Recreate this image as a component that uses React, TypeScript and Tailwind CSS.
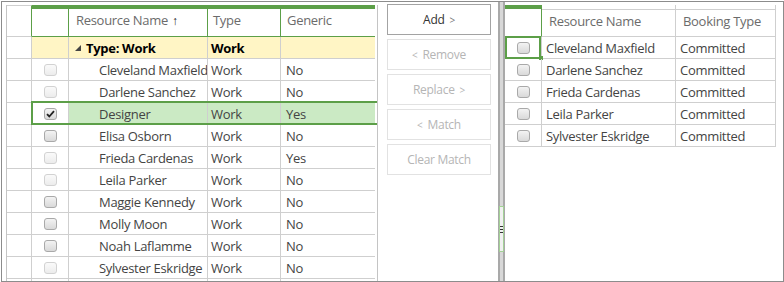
import React from 'react';

const font = { fontFamily: '"Open Sans", "Noto Sans", sans-serif' };

interface Row {
  name: string;
  type: string;
  generic: string;
  faded?: boolean;
  checked?: boolean;
  selected?: boolean;
}

const leftRows: Row[] = [
  { name: 'Cleveland Maxfield', type: 'Work', generic: 'No', faded: true },
  { name: 'Darlene Sanchez', type: 'Work', generic: 'No', faded: true },
  { name: 'Designer', type: 'Work', generic: 'Yes', checked: true, selected: true },
  { name: 'Elisa Osborn', type: 'Work', generic: 'No' },
  { name: 'Frieda Cardenas', type: 'Work', generic: 'Yes', faded: true },
  { name: 'Leila Parker', type: 'Work', generic: 'No', faded: true },
  { name: 'Maggie Kennedy', type: 'Work', generic: 'No' },
  { name: 'Molly Moon', type: 'Work', generic: 'No' },
  { name: 'Noah Laflamme', type: 'Work', generic: 'No' },
  { name: 'Sylvester Eskridge', type: 'Work', generic: 'No', faded: true },
];

const rightRows = ['Cleveland Maxfield', 'Darlene Sanchez', 'Frieda Cardenas', 'Leila Parker', 'Sylvester Eskridge'];

const Checkbox: React.FC<{ faded?: boolean; checked?: boolean }> = ({ faded, checked }) => (
  <div
    className={
      'w-[13px] h-[12px] rounded-[3px] border flex items-center justify-center ' +
      (faded
        ? 'border-[#d2d2d2] bg-gradient-to-b from-[#fafafa] to-[#ececec]'
        : 'border-[#a9a9a9] bg-gradient-to-b from-[#f3f3f3] to-[#d9d9d9]')
    }
  >
    {checked && (
      <svg width="9" height="8" viewBox="0 0 9 8">
        <path d="M1 4.2 L3.3 6.5 L8 1.2" fill="none" stroke="#222" strokeWidth="1.8" />
      </svg>
    )}
  </div>
);

const LeftGrid = () => (
  <div className="ml-[4px] mt-[3px] w-[372px] border-x border-[#c4c4c4] overflow-hidden flex flex-col">
    {/* header */}
    <div className="flex h-[32px] shrink-0">
      <div className="w-[25px] border-t border-b border-r border-t-[#cfcfcf] border-b-[#cfcfcf] border-r-[#5c9f48]" />
      <div className="w-[37px] border-t-4 border-r border-b border-[#5c9f48]" />
      <div className="w-[139px] border-t-4 border-r border-b border-[#5c9f48] pl-[7px] pb-[4px] flex items-center text-[#6b6b6b]">
        Resource Name <span className="ml-[4px] text-[12px] text-[#222]">↑</span>
      </div>
      <div className="w-[73px] border-t-4 border-r border-b border-[#5c9f48] pl-[5px] pb-[4px] flex items-center text-[#6b6b6b]">
        Type
      </div>
      <div className="w-[94px] border-t-4 border-b border-[#5c9f48] pl-[6px] pb-[4px] flex items-center text-[#6b6b6b]">
        Generic
      </div>
    </div>
    {/* group row */}
    <div className="flex h-[22px] shrink-0">
      <div className="w-[25px] border-r border-b border-[#cfcfcf]" />
      <div className="w-[37px] border-r border-b border-[#cfcfcf] bg-[#fff5c5]" />
      <div className="w-[139px] border-r border-b border-[#cfcfcf] bg-[#fff5c5] flex items-center pl-[6px] pt-px font-bold text-black whitespace-nowrap">
        <svg width="6" height="6" viewBox="0 0 6 6" className="mr-[5px]">
          <polygon points="6,0 6,6 0,6" fill="#444" />
        </svg>
        Type: Work
      </div>
      <div className="w-[73px] border-r border-b border-[#cfcfcf] bg-[#fff5c5] flex items-center pl-[3px] pt-px font-bold text-black">
        Work
      </div>
      <div className="w-[94px] border-b border-[#cfcfcf] bg-[#fff5c5]" />
    </div>
    {leftRows.map((r) => (
      <div key={r.name} className="relative flex h-[22px] shrink-0">
        <div className="w-[25px] border-r border-b border-[#cfcfcf]" />
        <div className="w-[37px] border-r border-b border-[#cfcfcf] flex items-center justify-center">
          <Checkbox faded={r.faded} checked={r.checked} />
        </div>
        <div
          className={
            'w-[139px] border-r border-b border-[#cfcfcf] flex items-center pl-[30px] pt-px whitespace-nowrap overflow-hidden ' +
            (r.selected ? 'bg-[#cbeac4]' : '')
          }
        >
          {r.name}
        </div>
        <div
          className={
            'w-[73px] border-r border-b border-[#cfcfcf] flex items-center pl-[3px] pt-px ' +
            (r.selected ? 'bg-[#cbeac4]' : '')
          }
        >
          {r.type}
        </div>
        <div
          className={
            'w-[94px] border-b border-[#cfcfcf] flex items-center pl-[5px] pt-px ' + (r.selected ? 'bg-[#cbeac4]' : '')
          }
        >
          {r.generic}
        </div>
        {r.selected && (
          <div className="absolute left-[24px] -right-[3px] -top-[2px] bottom-0 border-2 border-[#5c9f48] pointer-events-none" />
        )}
      </div>
    ))}
    <div className="flex h-[22px] shrink-0">
      <div className="w-[25px] border-r border-[#cfcfcf]" />
      <div className="w-[37px] border-r border-[#cfcfcf]" />
      <div className="w-[139px] border-r border-[#cfcfcf]" />
      <div className="w-[73px] border-r border-[#cfcfcf]" />
    </div>
  </div>
);

const buttons = [
  { label: 'Add', pre: '', post: '>', enabled: true },
  { label: 'Remove', pre: '<', post: '' },
  { label: 'Replace', pre: '', post: '>' },
  { label: 'Match', pre: '<', post: '' },
  { label: 'Clear Match', pre: '', post: '' },
];

const Buttons = () => (
  <div className="ml-[9px] mt-[2px] flex flex-col gap-[4px] text-[12px]">
    {buttons.map((b) => (
      <div
        key={b.label}
        className={
          'w-[104px] h-[31px] border flex items-center justify-center pt-px ' +
          (b.enabled ? 'border-[#a3a3a3] text-[#333]' : 'border-[#e2e2e2] text-[#b5b5b5]')
        }
      >
        {b.pre && <span className="text-[10px] mr-[5px] text-[#b5b5b5]">{b.pre}</span>}
        {b.label}
        {b.post && (
          <span className={'text-[10px] ml-[5px] ' + (b.enabled ? 'text-[#777]' : 'text-[#b5b5b5]')}>{b.post}</span>
        )}
      </div>
    ))}
  </div>
);

const Splitter = () => (
  <div className="ml-[7px] w-[7px] border-x-2 border-[#a9a9a9] bg-[#d8d8d8] flex flex-col items-center shrink-0">
    <div className="mt-[204px] w-[5px] h-[46px] -mx-px border border-[#a3d196] bg-[#f1f1f1] flex flex-col items-center justify-center gap-[2px]">
      <div className="w-[3px] h-px bg-[#333]" />
      <div className="w-[3px] h-px bg-[#333]" />
      <div className="w-[3px] h-px bg-[#333]" />
    </div>
  </div>
);

const RightGrid = () => (
  <div className="mt-[3px] flex flex-col">
    <div className="flex h-[32px]">
      <div className="w-[37px] border-t-4 border-r border-t-[#5c9f48] border-r-[#5c9f48] border-b border-b-[#cfcfcf]" />
      <div className="w-[134px] flex flex-col">
        <div className="h-[4px] border-r border-[#cfcfcf]" />
        <div className="flex-1 border-t border-r border-b border-[#cfcfcf] pl-[7px] pb-[4px] flex items-center text-[#6b6b6b]">
          Resource Name
        </div>
      </div>
      <div className="w-[100px] flex flex-col">
        <div className="h-[4px] border-r border-[#cfcfcf]" />
        <div className="flex-1 border-t border-r border-b border-[#cfcfcf] pl-[7px] pb-[4px] flex items-center text-[#6b6b6b]">
          Booking Type
        </div>
      </div>
    </div>
    {rightRows.map((n, i) => (
      <div key={n} className="flex h-[22px]">
        <div className="relative w-[37px] border-r border-b border-[#cfcfcf] flex items-center justify-center">
          <Checkbox />
          {i === 0 && (
            <>
              <div className="absolute left-0 right-0 -top-px -bottom-px border-2 border-[#5c9f48]" />
              <div className="absolute -right-[2px] -bottom-[2px] w-[4px] h-[4px] bg-[#5c9f48]" />
            </>
          )}
        </div>
        <div className="w-[134px] border-r border-b border-[#cfcfcf] flex items-center pl-[4px] pt-px whitespace-nowrap">
          {n}
        </div>
        <div className="w-[100px] border-r border-b border-[#cfcfcf] flex items-center pl-[4px] pt-px">Committed</div>
      </div>
    ))}
  </div>
);

export default function App() {
  return (
    <div
      className="w-[784px] h-[282px] bg-white pl-px pt-px text-[13px] text-[#444] leading-none tracking-[-0.3px]"
      style={font}
    >
      <div className="w-[783px] h-[281px] border border-[#8c8c8c] flex overflow-hidden">
        <LeftGrid />
        <Buttons />
        <Splitter />
        <RightGrid />
      </div>
    </div>
  );
}
